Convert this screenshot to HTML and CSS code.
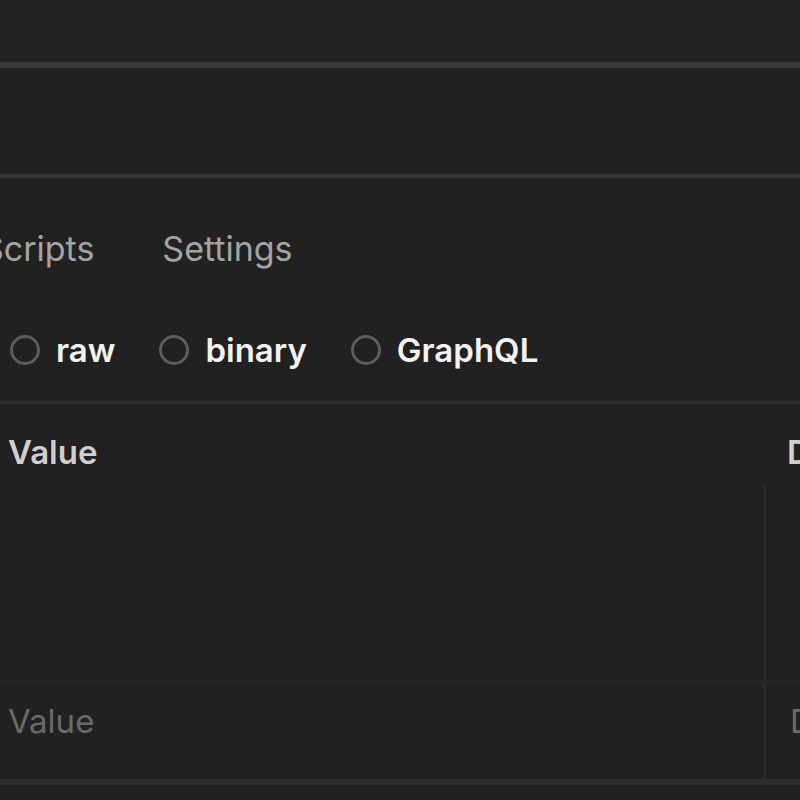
FILE: index.html
```html
<!DOCTYPE html>
<html>
<head>
<meta charset="utf-8">
<link rel="stylesheet" href="styles.css">
</head>
<body>
<div class="app">
  <div class="topbar"></div>
  <div class="rule rule-strong"></div>
  <div class="urlbar"></div>
  <div class="rule"></div>
  <div class="tabs">
    <span class="tab">Scripts</span>
    <span class="tab">Settings</span>
  </div>
  <div class="bodytypes">
    <label class="radio"><span class="circle"></span><span class="rlabel">raw</span></label>
    <label class="radio"><span class="circle"></span><span class="rlabel">binary</span></label>
    <label class="radio"><span class="circle"></span><span class="rlabel">GraphQL</span></label>
  </div>
  <div class="rule rule-table"></div>
  <div class="table">
    <div class="row head">
      <div class="cell c-value">Value</div>
      <div class="cell c-desc">Description</div>
    </div>
    <div class="row filled">
      <div class="cell c-value"></div>
      <div class="cell c-desc"></div>
    </div>
    <div class="row placeholder">
      <div class="cell c-value">Value</div>
      <div class="cell c-desc">Description</div>
    </div>
  </div>
  <div class="rule rule-bottom"></div>
</div>
</body>
</html>
```

FILE: styles.css
```css
html, body {
  margin: 0;
  padding: 0;
  background: #212121;
  overflow: hidden;
}
.app {
  width: 800px;
  height: 800px;
  overflow: hidden;
  font-family: Inter, "Noto Sans", "Liberation Sans", sans-serif;
  background: #212121;
}
.topbar {
  height: 62px;
  background: #232323;
}
.rule {
  height: 4px;
  background: #363636;
}
.rule-strong {
  height: 6px;
  background: #393939;
}
.urlbar {
  height: 106px;
  background: #212121;
}
.tabs {
  display: flex;
  align-items: center;
  gap: 68px;
  height: 100px;
  margin-top: 20px;
  margin-left: -18px;
}
.tab {
  font-size: 34px;
  color: #a4a4a4;
}
.bodytypes {
  display: flex;
  align-items: center;
  gap: 44px;
  height: 103px;
  padding-left: 10px;
}
.radio {
  display: flex;
  align-items: center;
  gap: 16px;
}
.circle {
  width: 24px;
  height: 24px;
  border: 3px solid #5c5c5c;
  border-radius: 50%;
}
.rlabel {
  font-size: 33px;
  font-weight: 600;
  color: #f2f2f2;
}
.rule-table {
  height: 3px;
  background: #2b2b2b;
}
.table {
  display: flex;
  flex-direction: column;
}
.row {
  display: grid;
  grid-template-columns: 763px 1fr;
}
.cell {
  padding-left: 8px;
  font-size: 33px;
  white-space: nowrap;
  overflow: hidden;
}
.c-desc {
  padding-left: 24px;
}
.head {
  height: 64px;
  padding-top: 16px;
  align-items: center;
}
.head .cell {
  font-weight: 600;
  color: #cfcfcf;
}
.filled {
  height: 196px;
  border-bottom: 3px solid #262626;
}
.filled .c-desc,
.placeholder .c-desc {
  border-left: 3px solid #2a2a2a;
}
.placeholder {
  height: 96px;
}
.placeholder .cell {
  display: flex;
  align-items: center;
  padding-bottom: 20px;
  color: #6a6a6a;
}
.rule-bottom {
  height: 6px;
  background: #2e2e2e;
}
```
